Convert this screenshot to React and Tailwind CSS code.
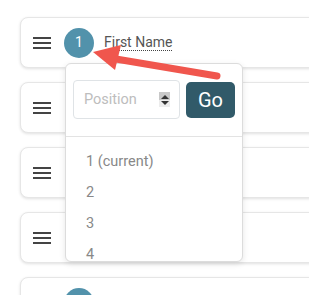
import React from "react";

const fields = [
  { label: "First Name", show: true },
  { label: "Last Name", show: false },
  { label: "Email", show: false },
  { label: "Phone", show: false },
  { label: "Address", show: true },
];

const Hamburger = () => (
  <svg width="18" height="14" viewBox="0 0 18 14" className="shrink-0">
    <rect x="0" y="1" width="18" height="2" fill="#444" />
    <rect x="0" y="6" width="18" height="2" fill="#444" />
    <rect x="0" y="11" width="18" height="2" fill="#444" />
  </svg>
);

const Card = ({ index, label, show }) => (
  <div className="h-[51px] w-[310px] shrink-0 rounded-l-[8px] border border-[#e6e6e6] bg-white shadow-[0_1px_3px_rgba(0,0,0,0.12)] flex items-center pl-[12px]">
    <Hamburger />
    {show && (
      <>
        <div className="ml-[13px] w-[30px] h-[30px] shrink-0 rounded-full bg-[#5292ab] text-white flex items-center justify-center text-[14px]">
          {index === 1 ? index : ""}
        </div>
        {index === 1 && (
          <span className="ml-[10px] text-[14px] text-[#555] border-b border-dotted border-[#444] leading-[16px]">
            {label}
          </span>
        )}
      </>
    )}
  </div>
);

export default function App() {
  return (
    <div
      className="relative w-[309px] h-[295px] overflow-hidden bg-white"
      style={{ fontFamily: "Roboto, 'Liberation Sans', sans-serif" }}
    >
      <div className="flex flex-col gap-[14px] pt-[17px] pl-[20px]">
        {fields.map((f, i) => (
          <Card key={f.label} index={i + 1} label={f.label} show={f.show} />
        ))}
      </div>

      {/* position popover */}
      <div className="absolute left-[65px] top-[63px] w-[178px] h-[199px] overflow-hidden rounded-[6px] border border-[#dcdcdc] bg-white shadow-[0_2px_6px_rgba(0,0,0,0.1)]">
        <div className="flex items-center gap-[6px] pl-[7px] pt-[16px] pb-[17px] border-b border-[#e3e3e3]">
          <div className="relative w-[107px] h-[39px] rounded-[4px] border border-[#dfe3e6] flex items-center pl-[10px]">
            <span className="text-[14.5px] text-[#bdbdbd]">Position</span>
            <div className="absolute right-[9px] top-[11px] w-[11px] h-[15px] flex flex-col">
              <div className="h-1/2 bg-[#c8c8c8] flex items-end justify-center">
                <div className="w-0 h-0 border-l-[4px] border-r-[4px] border-b-[4px] border-l-transparent border-r-transparent border-b-[#333] mb-[1px]" />
              </div>
              <div className="h-1/2 bg-[#ececec] flex items-start justify-center">
                <div className="w-0 h-0 border-l-[4px] border-r-[4px] border-t-[4px] border-l-transparent border-r-transparent border-t-[#333] mt-[1px]" />
              </div>
            </div>
          </div>
          <button className="w-[49px] h-[36px] rounded-[5px] bg-[#315a69] text-white text-[20px]">
            Go
          </button>
        </div>
        <ul className="pt-[9px] pl-[20px] text-[14.5px] text-[#888]">
          <li className="h-[31px] flex items-center">1 (current)</li>
          <li className="h-[31px] flex items-center">2</li>
          <li className="h-[31px] flex items-center">3</li>
          <li className="h-[31px] flex items-center">4</li>
        </ul>
      </div>

      {/* annotation arrow */}
      <svg className="absolute left-0 top-0 pointer-events-none" width="309" height="295" viewBox="0 0 309 295">
        <line x1="217" y1="76" x2="110" y2="58" stroke="#f0564d" strokeWidth="7" strokeLinecap="round" />
        <polygon points="93,52 121,45 115,70" fill="#f0564d" />
      </svg>
    </div>
  );
}
